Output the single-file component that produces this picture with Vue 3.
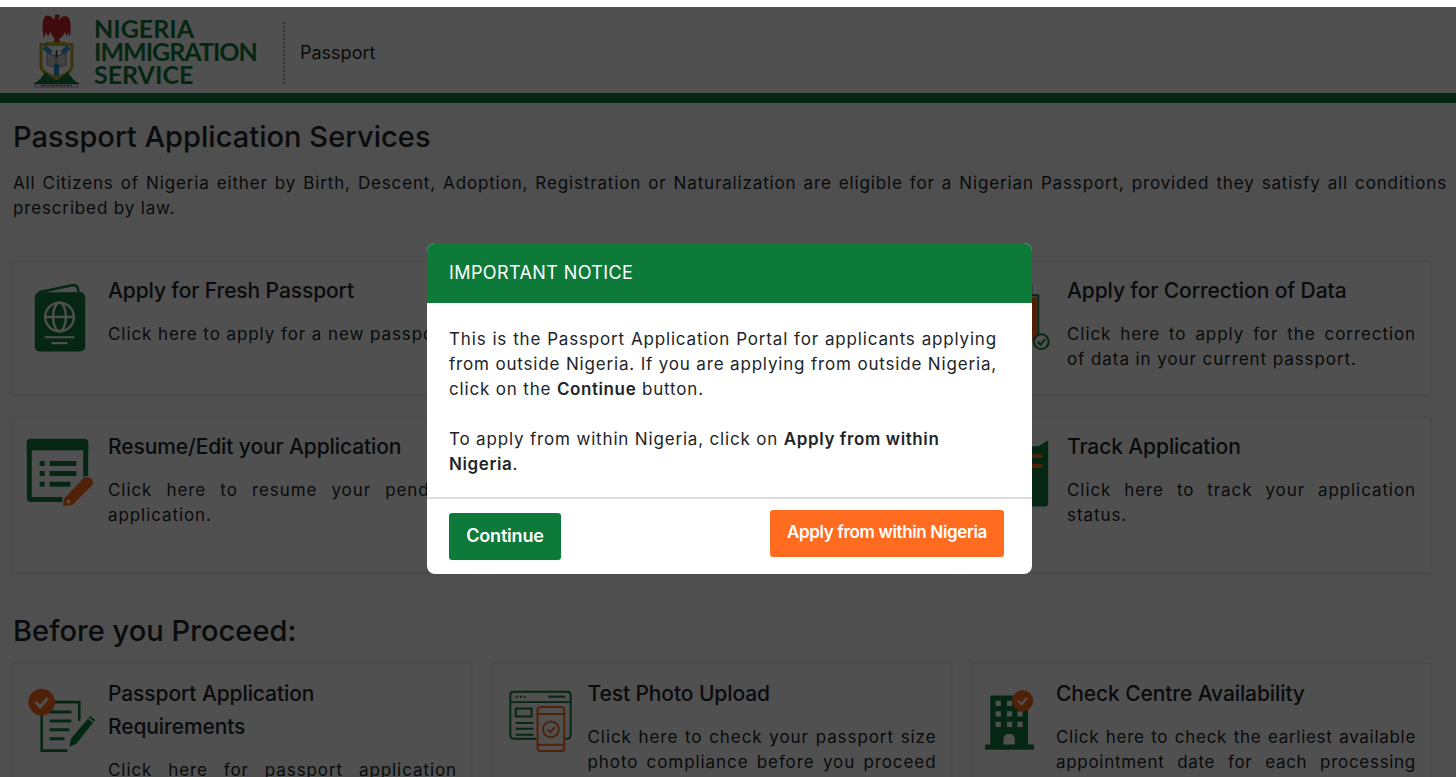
<script setup>
const topCards = [
  { id: 'fresh', title: 'Apply for Fresh Passport', text: 'Click here to apply for a new passport.' },
  { id: 'empty1' },
  { id: 'correct', title: 'Apply for Correction of Data', text: 'Click here to apply for the correction of data in your current passport.' },
  { id: 'resume', title: 'Resume/Edit your Application', text: 'Click here to resume your pending application.' },
  { id: 'empty2' },
  { id: 'track', title: 'Track Application', text: 'Click here to track your application status.' }
]
const proceedCards = [
  { id: 'req', title: 'Passport Application Requirements', text: 'Click here for passport application' },
  { id: 'photo', title: 'Test Photo Upload', text: 'Click here to check your passport size photo compliance before you proceed' },
  { id: 'centre', title: 'Check Centre Availability', text: 'Click here to check the earliest available appointment date for each processing', narrow: true }
]
</script>

<template>
  <div class="page">
    <header class="header">
      <svg class="arms" viewBox="0 0 50 76" width="50" height="76" aria-hidden="true">
        <path d="M23 7 C20 2 15 1 13 5 C11 10 11 19 13 25 L15 19 L17 24 L19 19 C21 22 23 25 24 27 L22 29 L29 29 L28 26 C31 24 33 22 34 19 L36 24 L37 19 L39 24 C40 17 40 9 38 5 C36 2 31 2 28 7 L28 4 L30 3 L26 1 L24 2 Z" fill="#c8242b"/>
        <path d="M15 29 H36 V31 H15 Z" fill="#b8a82a"/>
        <path d="M10 31.500 H41 V53 C41 59 33 62 25.500 65 C18 62 10 59 10 53 Z" fill="#fff" stroke="#b8a82a" stroke-width="3"/>
        <path d="M13 34 L20 40 M38 34 L31 40" stroke="#3aa0d8" stroke-width="5"/>
        <path d="M16 40 L25 43 V55 L16 52 Z M35 40 L26 43 V55 L35 52 Z" fill="#cfcfcf" stroke="#777" stroke-width=".8"/>
        <path d="M25.500 37 V44" stroke="#222" stroke-width="1.500"/>
        <path d="M23 51 H28 V63 H23 Z" fill="#2a8fc8"/>
        <path d="M2 71 C8 68 12 63 14 59 C18 63 22 65 25.500 67 C29 65 33 63 37 59 C39 63 43 68 49 71 Z" fill="#0e7a3a"/>
        <path d="M4 71 H47 V74 H4 Z" fill="#fff" stroke="#333" stroke-width=".5"/>
        <path d="M10 72.500 H41" stroke="#333" stroke-width="1" stroke-dasharray="1.5 1"/>
      </svg>
      <div class="logo-text">NIGERIA<br><span class="tight">IMMIGRATION</span><br>SERVICE</div>
      <div class="app-name">Passport</div>
    </header>

    <main class="main">
      <h1>Passport Application Services</h1>
      <p class="intro">All Citizens of Nigeria either by Birth, Descent, Adoption, Registration or Naturalization are eligible for a Nigerian Passport, provided they satisfy all conditions prescribed by law.</p>

      <section class="grid grid-top">
        <article v-for="c in topCards" :key="c.id" class="card">
          <template v-if="c.title">
            <svg class="icon" viewBox="0 0 95 100" aria-hidden="true">
              <g v-if="c.id === 'fresh'">
                <path d="M26 31 L60 24 C64 23 66 26 66 30 L66 32" fill="none" stroke="#0e7a3a" stroke-width="2.500"/>
                <rect x="22" y="31" width="51" height="60" rx="5" fill="#0e7a3a"/>
                <g fill="none" stroke="#fff" stroke-width="2.400">
                  <circle cx="47" cy="56" r="14.500"/>
                  <ellipse cx="47" cy="56" rx="6.500" ry="14.500"/>
                  <path d="M32.500 56 H61.500"/>
                  <path d="M32 76.500 H62 M39 82.500 H55" stroke-width="2.200"/>
                </g>
              </g>
              <g v-if="c.id === 'resume'">
                <path d="M50 82.800 H18 C17 82.800 16.500 82 16.500 81 V26 C16.500 24.500 17 24 18 24 H72 C73 24 73.500 24.500 73.500 26 V62" fill="none" stroke="#0e7a3a" stroke-width="5"/>
                <path d="M14 23 H76 V33 H14 Z" fill="#0e7a3a"/>
                <path d="M27 44 H32 V49 H27 Z M27 54 H32 V59 H27 Z M27 65 H32 V70 H27 Z M37 44 H64 V49 H37 Z M37 54 H64 V59 H37 Z M37 65 H58 V70 H37 Z" fill="#0e7a3a"/>
                <path d="M50 90 L51 82 L71 61 C73 59 76 59 79 61 C82 64 82 67 80 69 L60 89 Z" fill="#ff6b1f" stroke="#fff" stroke-width="1"/>
                <circle cx="56" cy="85" r="1.800" fill="#fff"/>
              </g>
              <g v-if="c.id === 'correct'">
                <path d="M20 24 H60 V34" fill="none" stroke="#0e7a3a" stroke-width="2"/>
                <path d="M20 34 H67 V76" fill="none" stroke="#0e7a3a" stroke-width="2"/>
                <rect x="30" y="36" width="36" height="44" fill="#ff6b1f"/>
                <path d="M53 27 H59 M53 31 H59" stroke="#0e7a3a" stroke-width="1.400"/>
                <circle cx="70" cy="81" r="7.500" fill="#fff" stroke="#0e7a3a" stroke-width="2"/>
                <path d="M66.500 81 L69 84 L74 78.500" fill="none" stroke="#0e7a3a" stroke-width="2"/>
              </g>
              <g v-if="c.id === 'track'">
                <path d="M20 23 L30 29 H67 L77 23 V86 C77 89 76 90 73 90 H24 C21 90 20 89 20 86 Z" fill="#0e7a3a"/>
                <path d="M40 39 H71 M40 49 H71" stroke="#ff6b1f" stroke-width="4"/>
              </g>
            </svg>
            <div class="body">
              <h2>{{ c.title }}</h2>
              <p>{{ c.text }}</p>
            </div>
          </template>
        </article>
      </section>

      <h1 class="second">Before you Proceed:</h1>

      <section class="grid proceed">
        <article v-for="c in proceedCards" :key="c.id" class="card" :class="{ narrow: c.narrow }">
          <svg class="icon" viewBox="0 0 95 100" aria-hidden="true">
            <g v-if="c.id === 'req'">
              <path d="M29 39 H67 V58 M55 88 H29 V50" fill="none" stroke="#0e7a3a" stroke-width="2.600"/>
              <path d="M37 49 H59 M37 58 H59 M37 67 H57 M37 76 H52" stroke="#0e7a3a" stroke-width="3"/>
              <path d="M57 84 L58.500 76 L78 53 L83 57 L64 81 Z" fill="#0e7a3a"/>
              <path d="M76 55 L81 59" stroke="#fff" stroke-width="1.500"/>
              <circle cx="29" cy="39" r="13.500" fill="#ff6b1f"/>
              <path d="M23 39 L27.500 44 L35 35" fill="none" stroke="#fff" stroke-width="3"/>
            </g>
            <g v-if="c.id === 'photo'">
              <g fill="none" stroke="#0e7a3a" stroke-width="2">
                <path d="M44 76 H21 C18.500 76 17.500 75 17.500 72 V32 C17.500 29.500 18.500 28.500 21 28.500 H75 C77.500 28.500 78.500 29.500 78.500 32 V72 C78.500 75 77.500 76 75 76 H73"/>
                <path d="M17.500 39 H78.500"/>
                <rect x="23" y="45.500" width="16" height="8"/>
                <path d="M23 60 H41 M23 66 H41 M23 72 H41"/>
                <path d="M56 33.500 H73"/>
              </g>
              <path d="M23 33.500 H25 M27 33.500 H29 M31 33.500 H33" stroke="#0e7a3a" stroke-width="2"/>
              <g fill="none" stroke="#ff6b1f" stroke-width="2">
                <rect x="45" y="44" width="27" height="44.500" rx="3" fill="#fff"/>
                <path d="M45 51 H72 M45 82 H72"/>
                <circle cx="58.500" cy="66.500" r="8"/>
                <path d="M55 66.500 L58 69.500 L62.500 64"/>
              </g>
            </g>
            <g v-if="c.id === 'centre'">
              <path d="M15 86 H71 V92 H15 Z M21 30 H64 V86 H21 Z" fill="#0e7a3a"/>
              <path d="M27 36 H33 V42 H27 Z M40 36 H46 V42 H40 Z M27 48 H33 V54 H27 Z M40 48 H46 V54 H40 Z M52 48 H58 V54 H52 Z M27 60 H33 V66 H27 Z M40 60 H46 V66 H40 Z M52 60 H58 V66 H52 Z" fill="#fff"/>
              <path d="M36 86 V80 C36 76 39 74 42.500 74 C46 74 49 76 49 80 V86 Z" fill="#fff"/>
              <circle cx="58" cy="36" r="12" fill="#ff6b1f"/>
              <path d="M53 36 L57 40 L63 32.500" fill="none" stroke="#fff" stroke-width="2.400"/>
            </g>
          </svg>
          <div class="body">
            <h2>{{ c.title }}</h2>
            <p class="cut">{{ c.text }}</p>
          </div>
        </article>
      </section>
    </main>

    <div class="backdrop">
      <div class="modal">
        <div class="modal-head">IMPORTANT NOTICE</div>
        <div class="modal-body">
          <p>This is the Passport Application Portal for applicants applying from outside Nigeria. If you are applying from outside Nigeria, click on the <b>Continue</b> button.</p>
          <p class="gap">To apply from within Nigeria, click on <b>Apply from within Nigeria</b>.</p>
        </div>
        <div class="modal-foot">
          <button class="btn green">Continue</button>
          <button class="btn orange">Apply from within Nigeria</button>
        </div>
      </div>
    </div>
  </div>
</template>

<style>
html, body { margin: 0; height: 100%; overflow: hidden; background: #fff; }
</style>

<style scoped>
* { box-sizing: border-box; }
.page {
  position: relative;
  height: 777px;
  overflow: hidden;
  padding-top: 7px;
  font-family: Inter, "Liberation Sans", sans-serif;
  color: #212529;
  background: #fff;
}
.header {
  height: 96px;
  display: flex;
  align-items: flex-start;
  background: #fff;
  border-bottom: 10px solid #0e7a3a;
}
.arms { flex: none; margin: 6px 0 0 31px; }
.logo-text {
  margin: 10px 0 0 13px;
  width: 190px;
  height: 69px;
  font-family: Lato, "Open Sans", sans-serif;
  font-weight: 700;
  font-size: 25px;
  line-height: 23px;
  letter-spacing: 0;
  color: #0e7a3a;
}
.tight { letter-spacing: -1px; }
.app-name {
  margin: 15px 0 0 -1px;
  padding: 0 0 0 15px;
  height: 62px;
  line-height: 62px;
  font-size: 18px;
  border-left: 2px dotted #aaa;
}
.main { padding: 0 9px 0 13px; background: #fbfbfb; height: 700px; }
h1 {
  margin: 0;
  padding-top: 16px;
  font-size: 29px;
  font-weight: 500;
  line-height: 36px;
  letter-spacing: 0.05px;
}
.intro {
  margin: 16px 0 0;
  font-size: 17px;
  line-height: 25px;
  letter-spacing: 0.85px;
  text-align: justify;
}
.grid {
  display: grid;
  grid-template-columns: repeat(3, 459px);
  column-gap: 20.500px;
  row-gap: 22px;
  margin-top: 14px;
}
.grid-top {
  grid-template-rows: 134px 156px;
  margin-top: 40px;
}
.card {
  display: flex;
  align-items: flex-start;
  min-height: 134px;
  background: #fff;
  border: 1px solid #e8e8e8;
  box-shadow: 0 1px 3px rgba(0,0,0,.08);
}
.icon { flex: none; width: 94px; height: 100px; margin: -1px 0 0 -1px; }
.narrow .icon { width: 83px; }
.body { flex: 1; min-width: 0; padding: 12px 14px 0 1px; }
.proceed .body { padding-top: 13px; }
h2 {
  margin: 0;
  padding-right: 6px;
  font-size: 21px;
  font-weight: 500;
  line-height: 33px;
  letter-spacing: -0.1px;
}
.body p {
  margin: 15px 0 0;
  font-size: 17px;
  line-height: 25px;
  letter-spacing: 0.92px;
  text-align: justify;
}
.body p.cut { text-align-last: justify; }
.narrow .body p.cut { letter-spacing: 0.7px; }
.second { padding-top: 40px; }
.backdrop {
  position: absolute;
  inset: 7px 0 0 0;
  background: rgba(0,0,0,.686);
  padding: 236px 0 0 427px;
}
.modal {
  width: 605px;
  height: 331px;
  background: #fff;
  border-radius: 8px;
  overflow: hidden;
  display: flex;
  flex-direction: column;
}
.modal-head {
  height: 60px;
  padding-left: 22px;
  background: #0e7a3a;
  color: #fff;
  font-size: 18px;
  line-height: 60px;
  letter-spacing: 0.4px;
}
.modal-body {
  height: 196px;
  padding: 24px 35px 0 22px;
  border-bottom: 2px solid #ddd;
  font-size: 17px;
  line-height: 25px;
  letter-spacing: 0.83px;
  text-align: justify;
}
.modal-body p { margin: 0; }
.modal-body .gap { margin-top: 25px; text-align: left; }
.modal-body b { font-weight: 600; letter-spacing: 0.6px; }
.modal-foot {
  display: flex;
  justify-content: space-between;
  align-items: flex-start;
  padding: 11px 28px 0 22px;
}
.btn {
  border: 0;
  border-radius: 3px;
  color: #fff;
  height: 47px;
  padding: 0 0 2px;
  font-family: inherit;
  font-weight: 600;
}
.green { width: 112px; margin-top: 3px; background: #0e7a3a; font-size: 18px; letter-spacing: -0.2px; }
.orange { width: 234px; padding-bottom: 3px; background: #ff6b1f; font-size: 17px; letter-spacing: -0.35px; }
</style>
